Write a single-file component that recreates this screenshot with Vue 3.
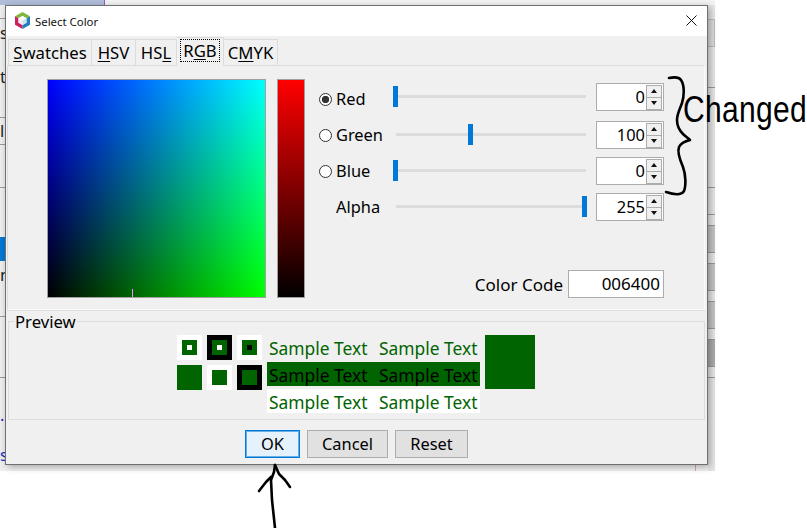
<script setup>
const leftCells = [
  { h: 14, line: true }, { h: 28, t: 's' }, { h: 13 }, { h: 34, t: 't' }, { h: 24, line: true },
  { h: 27, t: 'l', line: true }, { h: 43, line: true }, { h: 49 }, { h: 24, fill: 'blue' },
  { h: 28, t: 'n' }, { h: 28, line: true }, { h: 61, line: true }, { h: 12 },
  { h: 50, t: '.', link: true }, { h: 31, t: 's', link: true }
]
const rightCells = [
  { h: 14 }, { h: 28, fill: 'box' }, { h: 41, line: true }, { h: 100, line: true }, { h: 27, line: true },
  { h: 11, line: true }, { h: 27, fill: 'mid', line: true }, { h: 11, line: true },
  { h: 27, fill: 'mid', line: true }, { h: 11, line: true }, { h: 27, fill: 'mid', line: true },
  { h: 11, line: true }, { h: 27, fill: 'dark', line: true }, { h: 11, line: true }, { h: 88 }
]
const channels = [
  { name: 'Red', value: 0, radio: true, on: true },
  { name: 'Green', value: 100, radio: true },
  { name: 'Blue', value: 0, radio: true },
  { name: 'Alpha', value: 255, radio: false }
]
const thumbLeft = (v) => `${Math.ceil((v / 255) * 189)}px`
const swatches = ['a', 'b', 'c', 'd', 'e', 'f']
</script>

<template>
  <div class="screen">
    <div class="backdrop">
      <div class="topbar"><div class="topbar-blue"></div></div>
      <div class="backrow">
        <div class="strip">
          <div v-for="(c, i) in leftCells" :key="i" class="cell" :class="{ line: c.line, blue: c.fill === 'blue', link: c.link }" :style="{ height: c.h + 'px' }">{{ c.t }}</div>
        </div>
        <div class="behind"><div class="pink"></div></div>
        <div class="strip right">
          <div v-for="(c, i) in rightCells" :key="i" class="cell" :class="[c.fill, { line: c.line }]" :style="{ height: c.h + 'px' }"></div>
        </div>
      </div>
    </div>

    <div class="dialog">
      <div class="titlebar">
        <svg class="logo" viewBox="0 0 15 17" width="15" height="17">
          <polygon points="0,4.25 7.5,0 15,4.25 11.5,6.2 7.5,4 3.5,6.2" fill="#7fb83d" />
          <polygon points="0,4.25 3.5,6.2 3.5,10.8 7.5,13 7.5,17 0,12.75" fill="#cf1f5e" />
          <polygon points="15,4.25 11.5,6.2 11.5,10.8 7.5,13 7.5,17 15,12.75" fill="#1f7fc0" />
          <polygon points="3.5,6.2 7.5,4 11.5,6.2 7.5,8.4" fill="#ffffff" />
          <polygon points="3.5,6.2 7.5,8.4 7.5,13 3.5,10.8" fill="#f3eef2" />
          <polygon points="11.5,6.2 7.5,8.4 7.5,13 11.5,10.8" fill="#cfe0ee" />
        </svg>
        <span class="title">Select Color</span>
        <svg class="close" viewBox="0 0 11 11" width="11" height="11">
          <path d="M0.5 0.5 L10.5 10.5 M10.5 0.5 L0.5 10.5" stroke="#111" stroke-width="1" fill="none" />
        </svg>
      </div>

      <div class="content">
        <div class="tabs">
          <div class="tab w-swatches"><u>S</u>watches</div>
          <div class="tab w-hsv"><u>H</u>SV</div>
          <div class="tab w-hsl">HS<u>L</u></div>
          <div class="tab w-rgb active"><span class="focus">R<u>G</u>B</span></div>
          <div class="tab w-cmyk">C<u>M</u>YK</div>
        </div>

        <div class="pane">
          <div class="square"><div class="marker"></div></div>
          <div class="bar"></div>
          <div class="controls">
            <div v-for="ch in channels" :key="ch.name" class="row">
              <div class="radio-slot">
                <span v-if="ch.radio" class="radio" :class="{ on: ch.on }"></span>
              </div>
              <span class="label">{{ ch.name }}</span>
              <div class="slider">
                <div class="track"></div>
                <div class="thumb" :style="{ left: thumbLeft(ch.value) }"></div>
              </div>
              <div class="spin">
                <span class="value">{{ ch.value }}</span>
                <div class="arrows">
                  <div class="arrow"><i class="up"></i></div>
                  <div class="arrow"><i class="down"></i></div>
                </div>
              </div>
            </div>
            <div class="code-row">
              <span>Color Code</span>
              <div class="code">006400</div>
            </div>
          </div>
        </div>

        <div class="group">
          <div class="legend">Preview</div>
          <div class="preview">
            <div class="swatches">
              <div v-for="s in swatches" :key="s" class="swatch" :class="s"><i></i></div>
            </div>
            <div class="samples">
              <div class="sample"><span>Sample Text</span><span>Sample Text</span></div>
              <div class="sample inv"><span>Sample Text</span><span>Sample Text</span></div>
              <div class="sample white"><span>Sample Text</span><span>Sample Text</span></div>
            </div>
            <div class="big"></div>
          </div>
        </div>

        <div class="buttons">
          <div class="btn ok">OK</div>
          <div class="btn cancel">Cancel</div>
          <div class="btn reset">Reset</div>
        </div>
      </div>
    </div>

    <svg class="ink" viewBox="0 0 807 528" width="807" height="528">
      <path d="M669 78 C674 77 679 77 681 80 C685 86 684 97 682 103 C680 109 677 114 677 120 C677 127 680 131 683 134 C685 136 688 138 690 140 C686 141 681 143 679 147 C677 152 680 160 683 167 C686 175 686 186 684 191 C681 196 672 194 666 192" />
      <path d="M275 465 L274 472 L271 480 L272 500 L275 528" />
      <path d="M271 477 L266 482 L259 491" />
      <path d="M275 465 L279 474 L285 480 L290 487" />
    </svg>
    <div class="changed">Changed</div>
  </div>
</template>

<style>
html, body { margin: 0; background: #fff; }
</style>

<style scoped>
.screen {
  position: relative;
  width: 807px;
  height: 528px;
  overflow: hidden;
  background: #fff;
  font-family: "Noto Sans", "Open Sans", sans-serif;
  font-size: 16.4px;
  color: #000;
}
.backdrop { width: 715px; height: 471px; display: flex; flex-direction: column; }
.topbar { height: 5px; background: #f3f3f3; }
.topbar-blue { width: 104px; height: 5px; background: #b0bedb; border-right: 1px solid #9a5cc0; }
.backrow { flex: 1; display: flex; min-height: 0; }
.strip { width: 5px; background: #eeeeee; flex: none; }
.strip.right { width: 7px; background: #e6e6e6; overflow: hidden; }
.behind { flex: 1; position: relative; background: #f2f2f2; }
.pink { position: absolute; right: 12px; bottom: 0; width: 1px; height: 6px; background: #e8a0a0; }
.cell {
  box-sizing: border-box;
  display: flex;
  align-items: center;
  justify-content: flex-start;
  line-height: 1;
  color: #222;
  white-space: nowrap;
}
.cell.line { border-bottom: 1px solid #9a9a9a; }
.cell.blue { background: #0078d7; }
.cell.link { color: #1c33d0; }
.cell.box { background: #dcdcdc; border-right: 1px solid #bbb; border-top: 1px solid #bbb; border-bottom: 1px solid #bbb; }
.cell.mid { background: #c4c4c4; }
.cell.dark { background: #ababab; }

.dialog {
  position: absolute;
  left: 5px;
  top: 5px;
  width: 703px;
  height: 460px;
  box-sizing: border-box;
  border: 1px solid #707070;
  box-shadow: 2px 2px 7px rgba(0, 0, 0, 0.32);
  display: flex;
  flex-direction: column;
  background: #f0f0f0;
}
.titlebar {
  height: 30px;
  background: #fff;
  display: flex;
  align-items: center;
  padding-left: 9px;
  font-size: 11.4px;
  flex: none;
}
.logo { margin: 0 5px 2px 0; }
.title { flex: 1; color: #111; }
.close { margin: 0 10px 2px 0; }

.content { flex: 1; display: flex; flex-direction: column; min-height: 0; }
.tabs { display: flex; height: 29px; padding: 2px 0 0 2px; box-sizing: border-box; align-items: flex-end; }
.tab {
  box-sizing: border-box;
  height: 27px;
  margin-bottom: -1px;
  border: 1px solid #dcdcdc;
  border-left: none;
  display: flex;
  align-items: center;
  justify-content: center;
  line-height: 20px;
  background: #f0f0f0;
  font-size: 16.7px;
}
.w-swatches { width: 84px; border-left: 1px solid #dcdcdc; }
.w-hsv { width: 44px; }
.w-hsl { width: 41px; }
.w-rgb { width: 47px; }
.w-cmyk { width: 54px; }
.tab.active {
  height: 29px;
  border-bottom-color: #f0f0f0;
  position: relative;
  z-index: 1;
  padding-bottom: 3px;
}
.focus { border: 1px dotted #000; padding: 0 2px; line-height: 21px; }
u { text-underline-offset: 2px; text-decoration-thickness: 1px; }

.pane {
  box-sizing: border-box;
  height: 245px;
  margin: 0 2px 0 1px;
  flex: none;
  border: 1px solid #dcdcdc;
  border-right-color: #fbfbfb;
  border-bottom-color: #fbfbfb;
  box-shadow: 0 1px 0 #dddddd;
  display: flex;
  padding: 13px 0 0 39px;
  align-items: flex-start;
}
.square {
  position: relative;
  box-sizing: border-box;
  flex: none;
  width: 219px;
  height: 219px;
  border: 1px solid #a0a0a0;
  background: linear-gradient(to right, #000, #0f0), linear-gradient(to top, #000, #00f);
  background-blend-mode: screen;
}
.marker { position: absolute; left: 84px; bottom: 0; width: 1px; height: 8px; background: #ff8cff; }
.bar {
  box-sizing: border-box;
  flex: none;
  width: 28px;
  height: 219px;
  margin-left: 11px;
  border: 1px solid #a0a0a0;
  background: linear-gradient(to bottom, #f00, #000);
}
.controls { margin: 4px 0 0 14px; width: 345px; flex: none; }
.row { display: flex; align-items: center; height: 28px; margin-bottom: 8px; }
.row:first-child { margin-bottom: 10px; }
.row:first-child .label, .row:first-child .radio-slot { margin-top: 4px; }
.radio-slot { width: 17px; height: 13px; flex: none; }
.radio {
  display: block;
  box-sizing: border-box;
  width: 13px;
  height: 13px;
  border: 1px solid #333;
  border-radius: 50%;
  background: #fff;
}
.radio.on { background: radial-gradient(circle, #333 0 3.4px, #fff 4px); }
.label { width: 57px; flex: none; line-height: 28px; }
.slider { position: relative; width: 194px; height: 28px; flex: none; }
.track { position: absolute; left: 3px; right: 1px; top: 12px; height: 3px; background: #dcdcdc; }
.thumb { position: absolute; top: 3px; width: 5px; height: 21px; background: #0078d7; }
.spin {
  box-sizing: border-box;
  margin-left: 9px;
  width: 68px;
  height: 28px;
  border: 1px solid #acacac;
  background: #fff;
  display: flex;
  align-items: center;
  justify-content: flex-end;
}
.value { line-height: 26px; margin-right: 1px; }
.arrows {
  box-sizing: border-box;
  width: 16px;
  height: 25px;
  display: flex;
  flex-direction: column;
  gap: 1px;
  background: #acacac;
  border: 1px solid #acacac;
  margin-right: 1px;
}
.arrow { flex: 1; background: #f0f0f0; display: flex; align-items: center; justify-content: center; }
.arrow i { width: 0; height: 0; border-left: 3.5px solid transparent; border-right: 3.5px solid transparent; }
.arrow .up { border-bottom: 4px solid #111; }
.arrow .down { border-top: 4px solid #111; }
.code-row { display: flex; justify-content: flex-end; align-items: center; gap: 5px; margin-top: 49px; font-size: 17px; }
.code {
  box-sizing: border-box;
  width: 96px;
  height: 28px;
  border: 1px solid #acacac;
  background: #fff;
  text-align: right;
  padding-right: 3px;
  line-height: 26px;
}

.group {
  box-sizing: border-box;
  margin: 11px 2px 0 2px;
  height: 99px;
  border: 1px solid #dcdcdc;
  flex: none;
}
.legend {
  display: table;
  margin: -10px 0 0 5px;
  padding: 0 1px;
  background: #f0f0f0;
  line-height: 20px;
  font-size: 16.7px;
}
.preview { display: flex; gap: 5px; margin: 3px 0 0 168px; align-items: flex-start; }
.swatches { display: grid; grid-template-columns: repeat(3, 25px); grid-auto-rows: 25px; gap: 5px; }
.swatch { display: flex; align-items: center; justify-content: center; }
.swatch i { display: block; width: 15px; height: 15px; background: #006400; position: relative; }
.swatch.a, .swatch.c, .swatch.e { background: #fff; }
.swatch.b, .swatch.f { background: #000; }
.swatch.d { background: #006400; }
.swatch.a i::after, .swatch.b i::after, .swatch.c i::after {
  content: "";
  display: block;
  width: 5px;
  height: 5px;
  margin: 5px;
  background: #fff;
}
.swatch.c i::after { background: #000; }
.samples { display: flex; flex-direction: column; gap: 3px; width: 213px; }
.sample { display: flex; height: 24px; line-height: 24px; padding: 0 0 0 2px; color: #006400; box-sizing: border-box; font-size: 17.4px; }
.sample span { flex: none; width: 110px; white-space: nowrap; position: relative; top: 1px; }
.sample span:last-child { width: 101px; }
.sample.inv { background: #006400; color: #000; }
.sample.white { background: #fff; }
.big { width: 50px; height: 54px; background: #006400; }

.buttons { display: flex; justify-content: center; gap: 7px; margin-top: 10px; }
.btn {
  box-sizing: border-box;
  height: 28px;
  border: 1px solid #adadad;
  background: #e1e1e1;
  display: flex;
  align-items: center;
  justify-content: center;
  line-height: 24px;
}
.btn.ok { width: 55px; border: 1px solid #0078d7; box-shadow: inset 0 0 0 1px rgba(0, 120, 215, 0.55); background: #e5f1fb; }
.btn.cancel { width: 81px; }
.btn.reset { width: 73px; }

.ink { position: absolute; left: 0; top: 0; pointer-events: none; }
.ink path { fill: none; stroke: #000; stroke-width: 2.6; stroke-linecap: round; stroke-linejoin: round; }
.changed {
  position: absolute;
  left: 683px;
  top: 92px;
  font-family: "Liberation Sans", sans-serif;
  font-size: 30px;
  line-height: 36px;
  letter-spacing: 0.3px;
  color: #000;
  transform: scaleY(1.2);
  white-space: nowrap;
}
</style>
